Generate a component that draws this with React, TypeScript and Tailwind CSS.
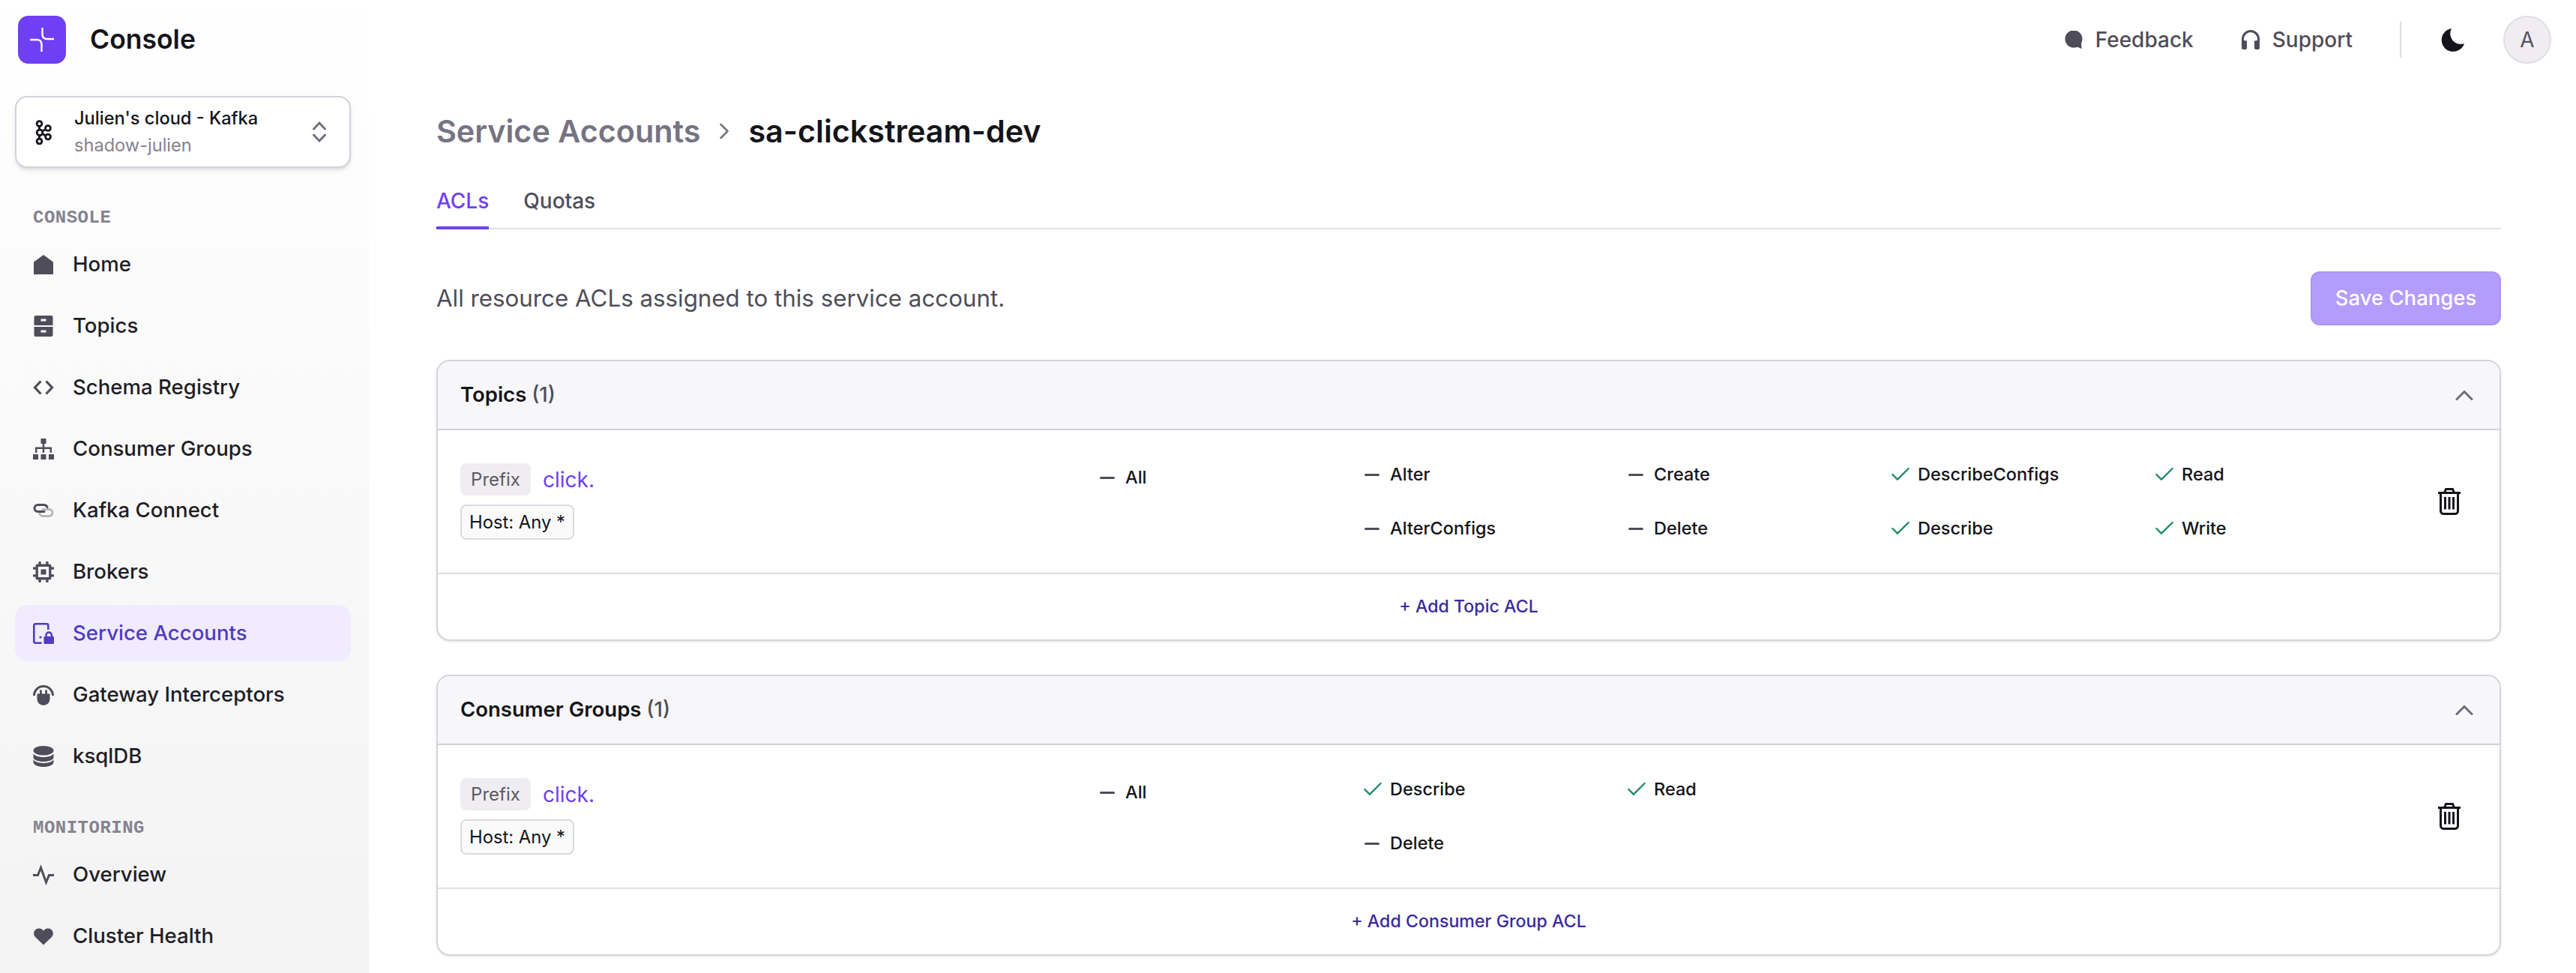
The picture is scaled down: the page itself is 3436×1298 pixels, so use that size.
import React from "react";
import { ChevronRight, Check } from "lucide-react";

const ic = "w-[28px] h-[28px] shrink-0";

const IconHome = () => (
  <svg className={ic} viewBox="0 0 28 28" fill="#4f4d59"><path d="M14 1 L27 10.500 V27 H1 V10.500 Z" /></svg>
);
const IconTopics = () => (
  <svg className={ic} viewBox="0 0 28 28"><path fill="#4f4d59" fillRule="evenodd" d="M3.500 0h21a2 2 0 0 1 2 2v11h-25V2a2 2 0 0 1 2-2Zm7 4.500v3h7v-3ZM1.500 15h25v11a2 2 0 0 1-2 2h-21a2 2 0 0 1-2-2Zm9 4.500v3h7v-3Z" /></svg>
);
const IconCode = () => (
  <svg className={ic} viewBox="0 0 28 28" fill="none" stroke="#4f4d59" strokeWidth="3.200"><path d="M10.500 5.500 L2.500 14 L10.500 22.500 M17.500 5.500 L25.500 14 L17.500 22.500" /></svg>
);
const IconGroups = () => (
  <svg className={ic} viewBox="0 0 28 28" fill="#4f4d59"><rect x="10.500" y="0" width="7" height="7" /><rect x="0" y="21" width="7" height="7" /><rect x="10.500" y="21" width="7" height="7" /><rect x="21" y="21" width="7" height="7" /><path d="M12.800 7h2.400v4.500H25V19h-2.400v-5H15.200v5h-2.400v-5H5.400v5H3v-7.500h9.800Z" /></svg>
);
const IconLink = () => (
  <svg className={ic} viewBox="0 0 28 28" fill="none" strokeWidth="3" strokeLinecap="round"><path stroke="#b9b7c0" d="M13 12.500h8.500a4.500 4.500 0 0 1 0 9H13a5 5 0 0 1-4-3" /><path stroke="#4f4d59" d="M15 15.500H6.500a4.500 4.500 0 0 1 0-9H15a5 5 0 0 1 4 3" /></svg>
);
const IconCpu = () => (
  <svg className={ic} viewBox="0 0 28 28" fill="#4f4d59"><rect x="5.200" y="5.200" width="17.600" height="17.600" rx="1" fill="none" stroke="#4f4d59" strokeWidth="3.400" /><rect x="10.500" y="10.500" width="7" height="7" /><rect x="7.500" y="0" width="3.200" height="5" /><rect x="17.300" y="0" width="3.200" height="5" /><rect x="7.500" y="23" width="3.200" height="5" /><rect x="17.300" y="23" width="3.200" height="5" /><rect x="0" y="7.500" width="5" height="3.200" /><rect x="0" y="17.300" width="5" height="3.200" /><rect x="23" y="7.500" width="5" height="3.200" /><rect x="23" y="17.300" width="5" height="3.200" /></svg>
);
const IconAccount = () => (
  <svg className={ic} viewBox="0 0 28 28"><path fill="none" stroke="#4f3cc4" strokeWidth="2.600" d="M11.500 26.700H3.300a2 2 0 0 1-2-2V3.300a2 2 0 0 1 2-2h15a2 2 0 0 1 2 2V9" /><circle cx="10" cy="19" r="1.600" fill="#4f3cc4" /><rect x="14.500" y="18" width="13.500" height="10" rx="1" fill="#4f3cc4" /><path fill="none" stroke="#4f3cc4" strokeWidth="2.400" d="M17.500 18v-1.800a3.700 3.700 0 0 1 7.400 0V18" /></svg>
);
const IconPlug = () => (
  <svg className={ic} viewBox="0 0 28 28" fill="#4f4d59"><path fill="none" stroke="#4f4d59" strokeWidth="3" d="M1.500 15a12.500 12.500 0 0 1 25 0" /><path d="M5.500 12.500h17v7a8.500 8.500 0 0 1-17 0Z" /><rect x="9" y="7.500" width="2.800" height="6" /><rect x="16.200" y="7.500" width="2.800" height="6" /></svg>
);
const IconDb = () => (
  <svg className={ic} viewBox="0 0 28 28" fill="#4f4d59"><ellipse cx="14" cy="6.300" rx="13.500" ry="6.300" /><path d="M.5 10.500C3 13.500 8 15 14 15s11-1.500 13.500-4.500v5c0 3-6 5.500-13.500 5.500S.5 18.500.5 15.500Z" /><path d="M.5 18.500C3 21.500 8 23 14 23s11-1.500 13.500-4.500v3.200C27.500 25.300 21.500 28 14 28S.5 25.300.5 21.700Z" /></svg>
);
const IconActivity = () => (
  <svg className={ic} viewBox="0 0 28 28" fill="none" stroke="#4f4d59" strokeWidth="3"><path d="M0 14.500H6.500L10.500 4.500L17.500 24L21.500 14.500H28" /></svg>
);
const IconHeart = () => (
  <svg className={ic} viewBox="0 0 28 28" fill="#4f4d59"><path d="M14 25.500 L3.500 15.500 C-1 11 1.500 3.500 8 3.500 C10.800 3.500 13 5 14 7 C15 5 17.200 3.500 20 3.500 C26.500 3.500 29 11 24.500 15.500 Z" /></svg>
);
const IconKafka = () => (
  <svg className="w-[22px] h-[33px] shrink-0" viewBox="0 0 22 33" fill="none" stroke="#15141a" strokeWidth="2.800"><circle cx="5.500" cy="5" r="3.400" /><circle cx="6" cy="16.800" r="3.800" /><circle cx="5.500" cy="28.500" r="3.400" /><circle cx="17" cy="11" r="3.400" /><circle cx="17" cy="22.500" r="3.400" /><path d="M5.500 8.400v4.600M5.500 20.500v4.600M9.500 15l4.500-2.500M9.500 18.500l4.500 2.500" /></svg>
);
const Logo = () => (
  <div className="w-[64px] h-[64px] rounded-[14px] bg-[#6f3ff5] shrink-0">
    <svg className="w-[64px] h-[64px]" viewBox="0 0 64 64" fill="none" stroke="#fff" strokeWidth="2.400"><path d="M16 32h9c4 0 6.500 2.500 6.500 6.500V48M32.500 16v9c0 4 2.500 6 6.500 6h9" /></svg>
  </div>
);
const IconFeedback = () => (
  <svg className="w-[24px] h-[24px] shrink-0" viewBox="0 0 24 24" fill="#4f4d59"><circle cx="12" cy="11" r="11.500" /><path d="M13 20 L22.500 24 L22 13 Z" /></svg>
);
const IconHeadphones = () => (
  <svg className="w-[24px] h-[26px] shrink-0" viewBox="0 0 24 26" fill="#4f4d59"><path fill="none" stroke="#4f4d59" strokeWidth="3" d="M1.500 17V12a10.500 10.500 0 0 1 21 0v5" /><rect x="0" y="14" width="7" height="12" rx="2" /><rect x="17" y="14" width="7" height="12" rx="2" /></svg>
);
const IconMoon = () => (
  <svg className="w-[32px] h-[32px] shrink-0" viewBox="0 0 32 32" fill="#15141a"><path d="M14 1 A15.500 15.500 0 1 0 31 21 A14 14 0 0 1 14 1 Z" /></svg>
);
const IconTrash = () => (
  <svg className="w-[30px] h-[36px] shrink-0" viewBox="0 0 30 36" fill="none" stroke="#15141a" strokeWidth="3"><path d="M0 6.500H30M8.500 6.500L10.500 1.500H19.500L21.500 6.500M3.500 6.500V30.500a4 4 0 0 0 4 4H22.500a4 4 0 0 0 4-4V6.500M9.500 12V28.500M15 12V28.500M20.500 12V28.500" /></svg>
);
const IconChevUp = () => (
  <svg className="w-[24px] h-[14px] shrink-0" viewBox="0 0 24 14" fill="none" stroke="#6e6b7b" strokeWidth="3" strokeLinecap="round"><path d="M2 12.500L12 2.500L22 12.500" /></svg>
);
const IconUpDown = () => (
  <svg className="w-[18px] h-[28px] shrink-0" viewBox="0 0 18 28" fill="none" stroke="#6e6b7b" strokeWidth="2.800" strokeLinecap="round"><path d="M1.500 10L9 2L16.500 10M1.500 18L9 26L16.500 18" /></svg>
);

const Nav = ({ icon, label, active }: { icon: React.ReactNode; label: string; active?: boolean }) => (
  <div className={`h-[75px] rounded-[16px] pl-[24px] flex items-center gap-[25px] text-[27.6px] font-medium ${active ? "bg-[#f0ebff] text-[#4f3cc4]" : "text-[#1f1e26]"}`}>
    {icon}
    <span>{label}</span>
  </div>
);

const Label = ({ children }: { children: React.ReactNode }) => (
  <div className="h-[34px] pl-[24px] flex items-center text-[24px] font-bold tracking-[0.5px] text-[#85828f] font-['Liberation_Mono',monospace]">{children}</div>
);

const Perm = ({ on, label }: { on?: boolean; label: string }) => (
  <div className="h-[72px] flex items-center gap-[14px] text-[23.500px] font-medium text-[#15141a]">
    <span className="w-[20px] shrink-0 flex items-center justify-center">
      {on ? (
        <Check className="w-[32px] h-[32px] shrink-0 text-[#1d8a64] ml-[2px]" strokeWidth={1.75} />
      ) : (
        <span className="w-[20px] h-[3px] shrink-0 bg-[#4f4d59] rounded-full" />
      )}
    </span>
    <span>{label}</span>
  </div>
);

const Card = ({ title, add, perms }: { title: string; add: string; perms: { on?: boolean; label: string }[] }) => (
  <div className="border-2 border-[#d6d4dc] rounded-[18px] overflow-hidden shadow-sm">
    <div className="h-[92px] bg-[#f7f6f9] border-b-2 border-[#d3d1da] pl-[30px] pr-[35px] flex items-center justify-between">
      <div className="text-[27.500px] font-semibold text-[#15141a]">{title} <span className="font-medium text-[#4f4d59]">(1)</span></div>
      <IconChevUp />
    </div>
    <div className="h-[192px] border-b-2 border-[#e0dde4] pl-[30px] flex items-center">
      <div className="w-[853px] shrink-0 flex flex-col items-start gap-[12px]">
        <div className="flex items-center gap-[16px]">
          <span className="h-[43px] w-[94px] rounded-[8px] bg-[#efedf1] flex items-center justify-center text-[24px] text-[#5c5967]">Prefix</span>
          <span className="text-[28px] text-[#6f3ff5]">click.</span>
        </div>
        <span className="h-[47px] w-[152px] rounded-[8px] border-2 border-[#dcdae2] bg-[#fafafa] flex items-center justify-center text-[23.800px] text-[#15141a]">Host: Any *</span>
      </div>
      <div className="w-[353px] shrink-0 self-start mt-[27px]">
        <Perm label="All" />
      </div>
      <div className="w-[1408px] shrink-0 grid grid-flow-col grid-rows-2 grid-cols-4">
        {perms.map((p) => (
          <Perm key={p.label} on={p.on} label={p.label} />
        ))}
      </div>
      <div className="ml-[24px]"><IconTrash /></div>
    </div>
    <div className="h-[87px] flex items-center justify-center text-[23.200px] font-medium text-[#3b2a9e]">{add}</div>
  </div>
);

export default function App() {
  return (
    <div className="w-[3436px] h-[1298px] overflow-hidden flex bg-white font-['Inter',sans-serif]">
      <aside className="w-[492px] shrink-0 h-full pl-[20px] pr-[24px] bg-linear-to-b from-white to-[#f3f3f4] flex flex-col">
        <div className="h-[105px] pl-[4px] flex items-center gap-[32px]">
          <Logo />
          <span className="text-[35.500px] font-semibold text-[#15141a]">Console</span>
        </div>
        <div className="mt-[23px] h-[96px] rounded-[16px] border-2 border-[#d3d1da] bg-white shadow-md pl-[25px] pr-[31px] flex items-center">
          <IconKafka />
          <div className="ml-[30px] flex-1">
            <div className="text-[23.600px] font-medium text-[#15141a] leading-[36px]">Julien's cloud - Kafka</div>
            <div className="text-[23.600px] text-[#85828f] leading-[36px]">shadow-julien</div>
          </div>
          <IconUpDown />
        </div>
        <div className="mt-[50px]"><Label>CONSOLE</Label></div>
        <div className="mt-[7px] flex flex-col gap-[7px]">
          <Nav icon={<IconHome />} label="Home" />
          <Nav icon={<IconTopics />} label="Topics" />
          <Nav icon={<IconCode />} label="Schema Registry" />
          <Nav icon={<IconGroups />} label="Consumer Groups" />
          <Nav icon={<IconLink />} label="Kafka Connect" />
          <Nav icon={<IconCpu />} label="Brokers" />
          <Nav icon={<IconAccount />} label="Service Accounts" active />
          <Nav icon={<IconPlug />} label="Gateway Interceptors" />
          <Nav icon={<IconDb />} label="ksqlDB" />
        </div>
        <div className="mt-[42px]"><Label>MONITORING</Label></div>
        <div className="mt-[7px] flex flex-col gap-[7px]">
          <Nav icon={<IconActivity />} label="Overview" />
          <Nav icon={<IconHeart />} label="Cluster Health" />
        </div>
      </aside>
      <div className="flex-1 min-w-0 flex flex-col">
        <header className="h-[105px] shrink-0 flex items-center justify-end pr-[33px]">
          <div className="flex items-center gap-[17px] text-[28px] font-medium text-[#4f4d59]">
            <IconFeedback /><span>Feedback</span>
          </div>
          <div className="ml-[64px] flex items-center gap-[17px] text-[28px] font-medium text-[#4f4d59]">
            <IconHeadphones /><span>Support</span>
          </div>
          <div className="ml-[63px] w-[2px] h-[48px] bg-[#dcdae2]" />
          <div className="ml-[53px]"><IconMoon /></div>
          <div className="ml-[51px] w-[64px] h-[64px] rounded-full bg-[#efedf1] border-2 border-[#e0dee3] flex items-center justify-center text-[28px] text-[#55525f]">A</div>
        </header>
        <main className="pl-[90px] pr-[100px]">
          <div className="mt-[40px] flex items-center text-[41.300px] font-semibold leading-[60px]">
            <span className="text-[#767382]">Service Accounts</span>
            <ChevronRight className="mx-[14px] w-[36px] h-[36px] text-[#767382]" strokeWidth={1.75} />
            <span className="text-[#15141a]">sa-clickstream-dev</span>
          </div>
          <div className="mt-[37px] h-[64px] border-b-2 border-[#e3e1e7] flex items-start gap-[46px] text-[28px] font-medium">
            <div className="h-[64px] border-b-4 border-[#6f3ff5] text-[#6f3ff5] pt-[5px]">ACLs</div>
            <div className="text-[#4f4d59] pt-[5px]">Quotas</div>
          </div>
          <div className="mt-[56px] flex items-center justify-between">
            <p className="text-[31.300px] text-[#4f4d59]">All resource ACLs assigned to this service account.</p>
            <div className="h-[72px] w-[254px] rounded-[12px] bg-[#b49cfc] border-2 border-[#ac94f4] flex items-center justify-center text-[27.500px] font-medium text-white">Save Changes</div>
          </div>
          <div className="mt-[46px] flex flex-col gap-[45px]">
            <Card
              title="Topics"
              add="+ Add Topic ACL"
              perms={[
                { label: "Alter" },
                { label: "AlterConfigs" },
                { label: "Create" },
                { label: "Delete" },
                { label: "DescribeConfigs", on: true },
                { label: "Describe", on: true },
                { label: "Read", on: true },
                { label: "Write", on: true },
              ]}
            />
            <Card
              title="Consumer Groups"
              add="+ Add Consumer Group ACL"
              perms={[
                { label: "Describe", on: true },
                { label: "Delete" },
                { label: "Read", on: true },
              ]}
            />
          </div>
        </main>
      </div>
    </div>
  );
}
